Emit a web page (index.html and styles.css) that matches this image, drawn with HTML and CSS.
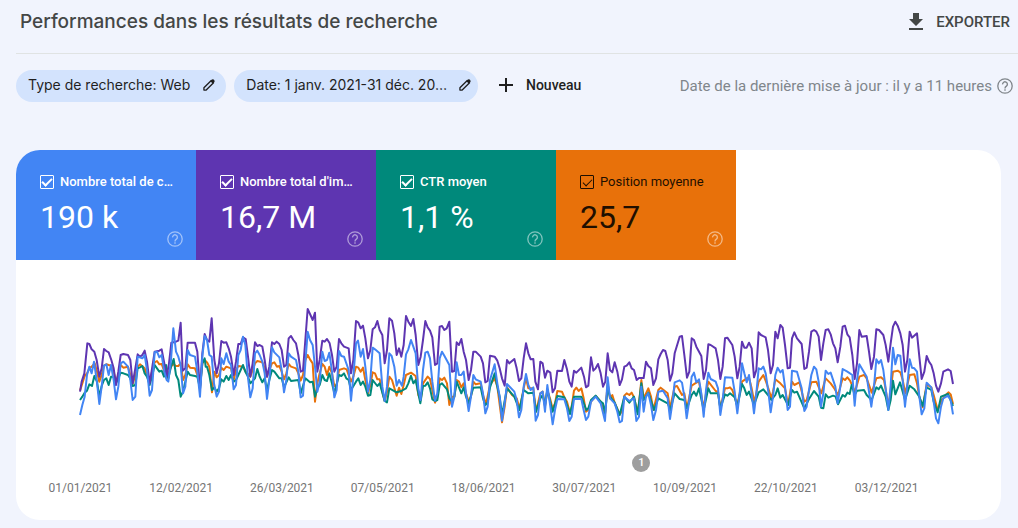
FILE: index.html
```html
<!DOCTYPE html>
<html lang="fr">
<head>
<meta charset="utf-8">
<meta name="viewport" content="width=device-width, initial-scale=1">
<title>Performances dans les résultats de recherche</title>
<link rel="stylesheet" href="styles.css">
</head>
<body>
<svg width="0" height="0" class="sprite" aria-hidden="true">
  <symbol id="pencil" viewBox="0 0 16 16"><path d="M2.2 11.2 10.6 2.8l2.6 2.6-8.4 8.4H2.2z" fill="none" stroke="currentColor" stroke-width="1.5" stroke-linejoin="round"/><path d="m9.6 3.8 2-2c.5-.5 1.1-.5 1.6 0l1 1c.5.5.5 1.1 0 1.6l-2 2z" fill="currentColor"/></symbol>
  <symbol id="help" viewBox="0 0 16 16"><circle cx="8" cy="8" r="7.2" fill="none" stroke="currentColor" stroke-width="1.3"/><path d="M5.6 6.4a2.4 2.4 0 1 1 3.8 1.8C8.500 8.800 8 9.200 8 10.400" fill="none" stroke="currentColor" stroke-width="1.4"/><path d="M7.300 11.300h1.400v1.500H7.300z" fill="currentColor"/></symbol>
</svg>
<header class="topbar">
  <h1 class="title">Performances dans les résultats de recherche</h1>
  <button class="export" type="button">
    <svg class="export-icon" viewBox="0 0 14 17" aria-hidden="true"><path d="M4 0h6v6h4l-7 7-7-7h4zM0 15h14v2H0z" fill="currentColor"/></svg>
    EXPORTER
  </button>
</header>
<main class="content">
  <div class="filters">
    <button class="chip" type="button"><span>Type de recherche: Web</span><svg class="chip-icon" aria-hidden="true"><use href="#pencil"/></svg></button>
    <button class="chip chip-date" type="button"><span>Date: 1 janv. 2021-31 déc. 20…</span><svg class="chip-icon" aria-hidden="true"><use href="#pencil"/></svg></button>
    <button class="new-filter" type="button"><svg class="plus" viewBox="0 0 14 14" aria-hidden="true"><path d="M7 0v14M0 7h14" stroke="currentColor" stroke-width="2"/></svg>Nouveau</button>
    <p class="updated">Date de la dernière mise à jour : il y a 11 heures<svg class="updated-icon" aria-hidden="true"><use href="#help"/></svg></p>
  </div>
  <section class="card">
    <div class="metrics">
      <div class="metric clicks">
        <label class="metric-label"><input class="check" type="checkbox" checked>Nombre total de c…</label>
        <div class="value">190 k</div>
        <svg class="metric-help" aria-hidden="true"><use href="#help"/></svg>
      </div>
      <div class="metric impressions">
        <label class="metric-label"><input class="check" type="checkbox" checked>Nombre total d'im…</label>
        <div class="value">16,7 M</div>
        <svg class="metric-help" aria-hidden="true"><use href="#help"/></svg>
      </div>
      <div class="metric ctr">
        <label class="metric-label"><input class="check" type="checkbox" checked>CTR moyen</label>
        <div class="value">1,1 %</div>
        <svg class="metric-help" aria-hidden="true"><use href="#help"/></svg>
      </div>
      <div class="metric position">
        <label class="metric-label"><input class="check check-dark" type="checkbox" checked>Position moyenne</label>
        <div class="value">25,7</div>
        <svg class="metric-help" aria-hidden="true"><use href="#help"/></svg>
      </div>
    </div>
    <div class="chart">
      <svg class="plot" viewBox="-162 -120 2955 648" role="img" aria-label="Évolution des performances en 2021">
        <polyline class="line line-position" points="30,272 37,250 44,228 51,220 58,205 65,200 74,190 81,215 88,245 95,225 102,197 109,193 123,197 131,215 138,245 145,225 152,195 160,203 174,200 181,225 188,252 196,225 203,200 210,193 224,205 231,225 239,250 246,215 254,187 261,183 268,193 275,192 283,215 290,235 303,200 310,192 318,198 325,198 332,190 339,240 346,225 353,193 360,203 375,205 382,225 390,260 397,190 404,180 411,187 418,200 426,277 433,215 440,232 447,225 454,203 461,210 469,200 483,205 491,240 498,210 505,198 519,200 526,213 541,230 555,190 562,183 577,187 584,205 591,230 598,210 606,190 613,187 621,200 628,198 635,215 642,238 649,220 656,192 663,200 678,205 685,220 692,242 699,225 706,180 713,165 720,178 728,190 735,305 742,250 749,220 757,192 764,200 771,225 778,200 786,220 793,258 800,255 807,210 822,205 830,208 843,245 850,230 858,200 865,203 872,215 879,203 886,240 894,280 901,255 908,217 915,220 922,238 929,238 937,275 944,303 951,275 958,230 966,240 980,287 987,263 994,282 1001,255 1008,225 1023,218 1037,228 1045,285 1052,300 1059,250 1073,230 1080,237 1087,270 1095,308 1102,290 1109,235 1116,240 1123,233 1131,250 1138,315 1146,290 1153,290 1160,240 1167,245 1174,262 1181,250 1188,280 1196,305 1203,290 1210,245 1217,253 1232,250 1239,285 1248,312 1260,255 1274,235 1282,260 1296,367 1304,320 1311,262 1326,285 1340,295 1349,327 1361,265 1368,235 1375,265 1390,265 1398,335 1411,280 1418,275 1425,320 1432,270 1440,295 1448,327 1455,310 1462,273 1476,275 1483,292 1491,305 1500,340 1505,320 1512,272 1519,263 1526,273 1534,265 1541,295 1548,335 1555,330 1563,305 1577,288 1592,305 1605,345 1613,250 1620,295 1627,285 1634,308 1649,343 1656,335 1663,287 1670,280 1678,285 1685,278 1692,292 1702,335 1707,310 1714,240 1721,295 1735,265 1743,290 1750,330 1765,270 1772,263 1793,280 1800,325 1814,260 1821,258 1836,285 1843,280 1851,325 1858,290 1865,257 1879,248 1887,245 1901,325 1908,280 1915,245 1937,273 1944,275 1951,325 1965,265 1972,265 1980,262 1987,270 2002,315 2009,280 2016,245 2030,235 2037,233 2045,265 2053,308 2066,245 2080,225 2088,245 2095,265 2104,295 2109,275 2116,238 2131,250 2145,265 2154,315 2166,245 2173,255 2188,247 2203,305 2210,300 2224,247 2239,245 2254,280 2267,235 2282,250 2294,267 2304,285 2318,235 2325,240 2332,232 2340,242 2355,275 2368,230 2382,225 2390,235 2405,278 2419,235 2433,232 2442,240 2456,320 2469,215 2483,212 2491,217 2498,240 2506,280 2519,225 2533,223 2541,250 2548,290 2558,322 2570,253 2577,258 2584,262 2591,285 2603,330 2615,300 2627,285 2636,277 2642,283 2649,312"/>
        <polyline class="line line-ctr" points="30,300 37,290 44,278 51,272 58,253 66,258 73,228 81,245 88,290 95,258 102,240 109,235 116,255 123,230 131,230 138,250 145,235 152,218 160,220 174,225 181,235 188,258 196,255 203,205 210,202 217,198 224,220 231,230 239,255 246,230 254,195 261,205 268,215 275,212 282,230 288,195 295,235 303,200 311,177 318,225 325,240 332,290 339,275 346,245 353,215 360,225 375,228 382,230 390,265 397,190 404,175 407,200 411,200 418,225 426,270 433,262 440,275 447,265 454,238 461,245 469,228 476,240 483,225 491,245 498,240 505,225 519,195 526,215 533,228 541,250 555,235 562,207 569,230 577,247 584,235 591,270 598,240 606,210 613,215 628,235 635,235 642,262 656,232 663,243 685,240 692,280 706,235 720,247 728,245 735,290 742,265 749,255 757,225 764,240 771,243 778,220 786,250 793,280 807,225 814,228 822,220 829,235 836,240 843,270 858,245 865,235 872,255 879,245 886,260 894,287 901,285 908,240 922,258 929,250 944,303 951,307 958,265 980,277 994,273 1008,265 1015,250 1023,227 1030,250 1037,240 1051,310 1059,258 1066,257 1073,247 1080,265 1087,298 1095,303 1102,300 1109,255 1116,250 1131,268 1138,295 1146,305 1153,290 1160,245 1174,280 1181,262 1188,290 1196,310 1210,263 1232,262 1239,295 1246,315 1253,308 1260,262 1274,220 1282,260 1289,290 1296,345 1311,265 1333,290 1348,330 1361,270 1375,280 1390,278 1398,335 1411,295 1418,285 1425,315 1432,270 1448,335 1462,288 1483,292 1500,342 1512,290 1534,290 1549,330 1555,325 1563,300 1577,287 1592,305 1599,310 1605,340 1613,265 1620,290 1634,308 1649,345 1663,290 1678,308 1692,290 1703,343 1714,250 1721,300 1735,278 1752,330 1765,295 1793,310 1801,330 1814,280 1829,297 1843,300 1851,325 1865,285 1872,275 1879,287 1887,265 1901,330 1915,265 1922,280 1944,280 1951,325 1965,283 1972,287 1980,280 1994,292 2002,320 2016,252 2023,265 2030,285 2037,275 2052,315 2066,277 2080,268 2094,285 2104,300 2116,285 2123,265 2131,293 2138,285 2154,315 2166,270 2173,278 2181,275 2203,325 2217,297 2232,273 2246,290 2253,323 2260,325 2267,283 2275,293 2289,287 2297,290 2304,313 2318,285 2325,290 2332,278 2339,282 2345,255 2354,285 2361,272 2382,270 2390,285 2405,300 2419,262 2426,268 2433,257 2447,290 2455,330 2462,300 2469,242 2476,283 2490,247 2505,300 2519,257 2533,268 2548,290 2558,318 2570,262 2584,270 2591,305 2603,337 2613,290 2634,282 2649,318"/>
        <polyline class="line line-impressions" points="30,275 35,245 43,220 52,130 58,132 65,148 73,155 80,180 88,230 95,205 102,147 109,153 116,157 124,180 131,205 138,255 145,215 152,165 160,162 174,165 181,180 188,250 196,205 203,163 210,170 217,165 224,152 231,185 239,250 247,200 254,155 268,152 275,148 282,185 290,230 297,190 304,128 318,125 325,122 332,68 338,212 346,205 353,128 375,128 382,155 390,270 397,160 404,102 411,120 418,125 425,55 433,180 440,220 447,190 454,123 461,128 469,127 476,145 483,170 491,225 498,185 505,132 512,132 519,112 527,117 534,170 541,230 548,190 555,127 562,138 569,135 577,140 584,180 591,230 598,200 606,127 613,132 620,125 628,132 635,150 642,200 649,195 656,115 663,108 670,120 678,130 685,165 692,215 699,212 706,120 713,27 720,42 728,60 735,38 742,215 749,180 757,122 764,125 771,117 779,130 786,165 793,215 800,200 807,117 814,130 822,140 836,145 843,220 850,180 858,63 865,68 872,85 879,77 886,115 894,175 901,150 908,88 915,82 922,63 929,90 937,105 944,190 951,150 958,55 966,62 973,100 980,165 987,145 994,170 1001,135 1008,48 1015,65 1023,78 1030,57 1037,105 1045,195 1052,170 1059,120 1066,63 1073,82 1080,92 1087,112 1095,195 1102,190 1109,80 1116,78 1123,90 1130,85 1138,65 1146,215 1153,213 1160,127 1167,135 1174,117 1181,155 1188,180 1196,240 1203,210 1210,155 1217,155 1232,170 1239,190 1246,247 1253,243 1260,167 1274,170 1282,182 1289,205 1296,235 1304,257 1311,180 1318,190 1333,177 1340,205 1347,243 1354,235 1361,175 1368,130 1375,160 1382,178 1390,177 1396,245 1404,268 1411,185 1418,190 1425,233 1432,212 1441,218 1448,277 1455,265 1462,212 1476,213 1483,180 1491,208 1498,245 1505,260 1512,212 1519,218 1534,203 1542,230 1548,262 1555,257 1563,172 1570,212 1577,205 1584,192 1592,220 1599,260 1606,245 1613,160 1620,210 1627,217 1634,187 1642,215 1649,255 1656,238 1663,200 1670,197 1678,187 1685,205 1692,210 1700,240 1707,234 1721,234 1728,185 1735,198 1743,205 1750,255 1758,235 1765,178 1772,162 1779,150 1786,153 1793,180 1800,242 1807,220 1814,160 1829,110 1836,108 1843,165 1851,233 1858,215 1865,115 1872,120 1879,140 1894,168 1901,237 1908,210 1915,133 1922,135 1937,145 1944,180 1951,237 1958,200 1965,115 1972,113 1987,135 1994,170 2002,235 2009,200 2016,125 2023,143 2030,143 2037,128 2045,145 2052,232 2059,210 2066,97 2073,105 2087,112 2094,150 2102,220 2109,195 2116,95 2123,115 2131,75 2138,83 2145,135 2153,205 2160,203 2166,115 2173,97 2181,115 2195,132 2203,207 2210,203 2217,155 2224,95 2232,90 2239,95 2246,110 2253,180 2260,130 2267,90 2275,88 2282,103 2289,130 2296,145 2303,187 2311,140 2318,80 2325,77 2332,103 2339,112 2347,165 2354,237 2361,190 2368,90 2375,110 2390,108 2397,155 2404,207 2412,170 2419,88 2427,90 2440,105 2447,135 2455,185 2462,130 2469,80 2476,65 2483,77 2491,100 2498,135 2505,215 2512,180 2519,95 2526,113 2541,100 2548,170 2555,237 2563,215 2570,168 2577,185 2584,195 2591,220 2598,257 2605,275 2613,250 2620,215 2634,208 2642,213 2649,252"/>
        <polyline class="line line-clicks" points="30,345 37,315 44,290 51,225 58,200 65,220 72,185 80,240 88,312 95,260 102,197 109,193 116,225 123,195 131,240 138,298 145,260 152,190 160,185 174,200 181,240 188,300 196,290 203,170 217,175 224,165 231,210 239,287 246,270 254,157 261,155 268,172 275,165 283,215 290,240 295,245 303,180 310,85 318,155 325,170 332,195 339,280 346,260 353,150 360,165 375,170 382,215 390,290 397,170 404,108 411,120 418,165 425,170 432,250 440,290 447,275 454,175 461,192 469,160 476,185 483,195 491,268 498,255 505,165 512,150 519,110 526,135 533,225 541,292 548,265 555,160 562,152 569,165 577,185 584,220 591,297 598,240 606,142 613,157 628,172 635,210 642,277 649,240 656,160 663,170 678,180 685,215 692,292 699,287 706,190 713,95 720,120 728,135 735,200 742,275 749,245 757,155 764,183 771,180 778,158 786,215 793,292 800,270 807,153 814,168 822,170 836,210 843,302 850,230 858,130 864,122 872,170 879,147 886,200 894,275 901,240 908,143 915,148 929,160 937,260 944,303 951,260 958,160 965,168 973,200 980,257 987,240 996,257 1001,230 1008,163 1015,148 1023,120 1030,140 1037,160 1045,265 1052,300 1059,210 1066,158 1073,155 1080,175 1087,245 1095,302 1102,280 1109,175 1116,155 1123,167 1138,195 1146,320 1153,290 1160,187 1167,225 1174,225 1181,215 1188,280 1196,333 1203,290 1210,225 1217,238 1232,245 1239,280 1246,340 1253,320 1260,240 1274,193 1282,250 1289,290 1296,362 1304,310 1311,252 1333,275 1340,300 1347,352 1354,330 1361,260 1368,222 1375,255 1382,270 1390,262 1397,362 1404,345 1411,280 1418,275 1425,335 1432,255 1441,320 1448,373 1455,330 1462,297 1483,298 1491,325 1498,363 1505,350 1512,297 1534,297 1541,330 1548,360 1555,350 1563,305 1577,290 1592,310 1605,363 1613,232 1620,295 1634,310 1642,335 1649,367 1656,363 1663,290 1678,303 1692,295 1699,363 1707,350 1714,260 1721,335 1728,290 1735,280 1743,315 1750,360 1758,330 1765,275 1779,272 1793,295 1800,357 1807,310 1814,247 1829,241 1836,248 1843,290 1850,355 1858,300 1865,230 1872,218 1879,247 1887,238 1894,280 1901,350 1908,270 1915,218 1922,237 1937,245 1944,265 1951,345 1958,300 1965,232 1987,233 1994,275 2002,340 2009,280 2016,190 2023,220 2030,247 2037,225 2045,280 2052,340 2059,280 2066,205 2073,208 2080,200 2087,220 2095,275 2102,337 2109,290 2116,225 2123,203 2131,217 2138,210 2145,260 2153,330 2160,320 2166,212 2181,215 2195,265 2203,333 2210,320 2217,270 2224,225 2232,200 2239,208 2246,245 2253,320 2260,280 2267,212 2275,222 2282,218 2296,260 2303,310 2311,260 2318,207 2332,215 2347,225 2354,317 2361,240 2368,193 2390,230 2404,320 2412,260 2419,178 2426,190 2433,180 2440,210 2455,330 2462,255 2469,143 2476,193 2483,165 2491,167 2498,240 2505,320 2512,255 2519,178 2526,203 2533,205 2541,215 2548,290 2555,343 2563,325 2570,248 2584,262 2591,305 2598,355 2605,370 2613,320 2620,295 2634,287 2642,300 2649,343"/>
      </svg>
      <span class="marker">1</span>
    </div>
    <div class="dates">
      <span>01/01/2021</span><span>12/02/2021</span><span>26/03/2021</span><span>07/05/2021</span><span>18/06/2021</span><span>30/07/2021</span><span>10/09/2021</span><span>22/10/2021</span><span>03/12/2021</span>
    </div>
  </section>
</main>
</body>
</html>
```
FILE: styles.css
```css
* { box-sizing: border-box; }

body {
  margin: 0;
  background: #f1f4fd;
  color: #1f1f1f;
  font-family: Roboto, "Liberation Sans", sans-serif;
}

button {
  border: 0;
  background: none;
  color: inherit;
  font-family: inherit;
  cursor: pointer;
}

.sprite { position: absolute; }

.topbar {
  display: flex;
  align-items: center;
  justify-content: space-between;
  height: 54px;
  margin-left: 16px;
  padding: 0 8px 10px 4px;
  border-bottom: 1px solid #e0e3e3;
}

.title {
  margin: 0;
  color: #444746;
  font: 500 19px/24px Inter, "Open Sans", sans-serif;
}

.export {
  display: flex;
  align-items: center;
  gap: 13px;
  padding: 0;
  color: #444746;
  font-size: 15px;
  font-weight: 500;
}

.export-icon { width: 14px; height: 17px; }

.content { padding: 16px 17px 8px 16px; }

.filters {
  display: flex;
  align-items: center;
  gap: 8px;
  height: 32px;
  margin-right: -12px;
}

.chip {
  display: flex;
  align-items: center;
  justify-content: space-between;
  gap: 12px;
  height: 32px;
  padding: 0 10px 2px 12px;
  border-radius: 16px;
  background: #d3e3fd;
  font: 400 14px/20px Inter, "Open Sans", sans-serif;
  white-space: nowrap;
}

.chip-date {
  gap: 11px;
  padding-right: 6px;
}

.chip-icon { flex: none; width: 14px; height: 14px; }

.new-filter {
  display: flex;
  align-items: center;
  gap: 13px;
  padding: 0 0 2px 13px;
  font-size: 14px;
  font-weight: 500;
}

.plus { width: 14px; height: 14px; }

.updated {
  display: flex;
  align-items: center;
  gap: 5px;
  margin: 0 0 0 auto;
  color: #80868b;
  font-size: 15px;
  font-weight: 400;
  white-space: nowrap;
}

.updated-icon { width: 16px; height: 16px; }

.card {
  margin-top: 48px;
  overflow: hidden;
  border-radius: 24px;
  background: #fff;
}

.metrics { display: flex; }

.metric {
  display: flex;
  flex-direction: column;
  width: 180px;
  height: 110px;
  padding: 24px 13px 12px 24px;
  color: #fff;
}

.clicks { background: #4285f4; }
.impressions { background: #5e35b1; }
.ctr { background: #00897b; }
.position { background: #e8710a; color: #1f0f00; }

.metric-label {
  display: flex;
  align-items: center;
  gap: 6px;
  font-size: 13px;
  font-weight: 500;
  line-height: 16px;
  white-space: nowrap;
}

.position .metric-label { font-weight: 400; }

.check {
  appearance: none;
  display: grid;
  flex: none;
  place-items: center;
  width: 14px;
  height: 14px;
  margin: 0;
  border: 1px solid currentColor;
  border-radius: 1px;
  color: inherit;
}

.check::after {
  content: "";
  width: 8px;
  height: 4px;
  margin-bottom: 2px;
  border: solid currentColor;
  border-width: 0 0 2px 2px;
  transform: rotate(-45deg);
}

.check-dark::after { border-width: 0 0 1px 1px; }

.value {
  margin-top: 8px;
  font-size: 32px;
  line-height: 38px;
}

.metric-help {
  align-self: flex-end;
  width: 16px;
  height: 16px;
  margin-top: -5px;
  color: #fff;
  opacity: .5;
}

.chart { position: relative; }

.plot { display: block; width: 100%; height: auto; }

.line {
  fill: none;
  stroke-width: 6;
  stroke-linejoin: round;
}

.line-position { stroke: #e8710a; }
.line-ctr { stroke: #00897b; }
.line-impressions { stroke: #5e35b1; }
.line-clicks { stroke: #4285f4; }

.marker {
  position: absolute;
  bottom: 4px;
  left: 63.5%;
  width: 18px;
  height: 18px;
  border-radius: 50%;
  background: #9e9e9e;
  color: #fff;
  font-size: 11px;
  font-weight: 500;
  line-height: 18px;
  text-align: center;
  transform: translateX(-50%);
}

.dates {
  display: grid;
  grid-template-columns: repeat(9, 1fr);
  padding: 4px 64px 24px 14px;
  color: #757575;
  font-size: 12px;
  line-height: 16px;
  text-align: center;
}
```
